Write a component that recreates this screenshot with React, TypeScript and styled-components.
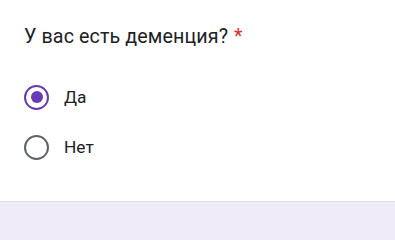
import styled, { createGlobalStyle } from "styled-components";

const GlobalStyle = createGlobalStyle`
    body {
        margin: 0;
        background: #f0ebf8;
        font-family: Roboto, "Noto Sans", Arial, sans-serif;
        color: #202124;
    }
`;

const StyledCard = styled.div`
    background: #ffffff;
    border-bottom: 1px solid #dadce0;
    height: 202px;
    box-sizing: border-box;
    padding: 24px 24px 0 24px;
`;

const StyledTitle = styled.div`
    font-size: 19.7px;
    line-height: 26px;
    letter-spacing: 0.1px;
    color: #202124;
`;

const StyledRequired = styled.span`
    color: #d93025;
    margin-left: 6px;
`;

const StyledOptions = styled.div`
    display: flex;
    flex-direction: column;
    gap: 26px;
    margin-top: 35px;
`;

const StyledOption = styled.label`
    display: flex;
    align-items: center;
    gap: 15px;
    height: 24px;
    font-size: 17.3px;
    cursor: pointer;
`;

const StyledRadio = styled.span<{ $checked: boolean }>`
    width: 25px;
    height: 25px;
    box-sizing: border-box;
    border-radius: 50%;
    border: 2.4px solid ${(p) => (p.$checked ? "#673ab7" : "#5f6368")};
    display: flex;
    align-items: center;
    justify-content: center;
    flex-shrink: 0;
    &::after {
        content: "";
        width: 12px;
        height: 12px;
        border-radius: 50%;
        background: #673ab7;
        display: ${(p) => (p.$checked ? "block" : "none")};
    }
`;

const options = ["Да", "Нет"];

export default function App() {
    const selected = "Да";
    return (
        <>
            <GlobalStyle />
            <StyledCard>
                <StyledTitle>
                    У вас есть деменция?
                    <StyledRequired>*</StyledRequired>
                </StyledTitle>
                <StyledOptions>
                    {options.map((option) => (
                        <StyledOption key={option}>
                            <StyledRadio $checked={option === selected} />
                            {option}
                        </StyledOption>
                    ))}
                </StyledOptions>
            </StyledCard>
        </>
    );
}
